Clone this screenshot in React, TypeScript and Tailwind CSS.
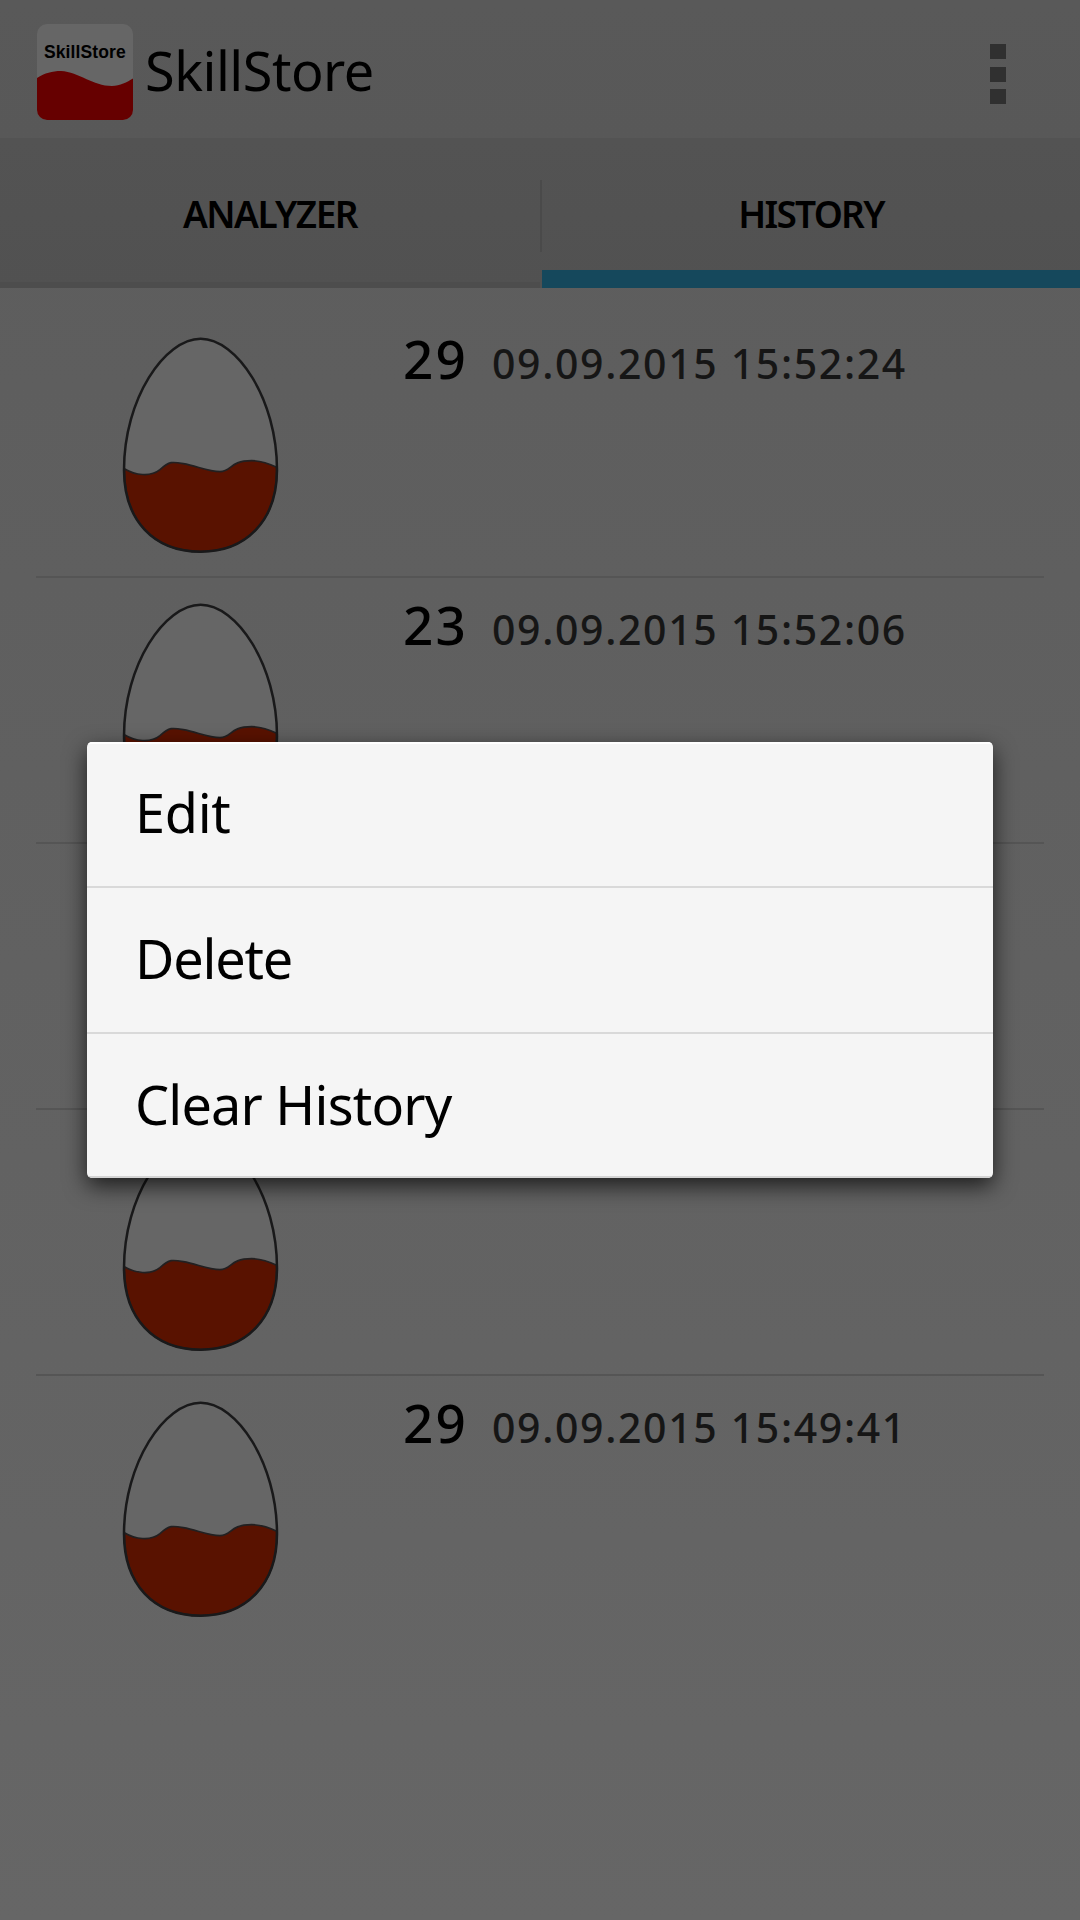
const entries = [
  { score: '29', date: '09.09.2015 15:52:24' },
  { score: '23', date: '09.09.2015 15:52:06' },
  { score: '', date: '' },
  { score: '', date: '' },
  { score: '29', date: '09.09.2015 15:49:41' },
];

const actions = [
  { label: 'Edit', spacing: 'tracking-[-0.3px]' },
  { label: 'Delete', spacing: 'tracking-[-1.2px]' },
  { label: 'Clear History', spacing: 'tracking-[-0.8px]' },
];

function Logo() {
  return (
    <div className="relative h-24 w-24 overflow-hidden rounded-[10px] bg-[#666666]">
      <svg className="block h-24 w-24" viewBox="0 0 96 96">
        <path d="M0 54C8 49 15 47 24 47C42 48 56 62 75 62C83 62 90 58 96 54.500V96H0Z" fill="#660000" />
      </svg>
      <span className="absolute left-[7px] top-[18px] font-['Liberation_Sans'] text-[17.5px] leading-5 font-bold tracking-[0.1px] text-black">
        SkillStore
      </span>
    </div>
  );
}

function Egg() {
  return (
    <svg className="block h-[217px] w-[157px]" viewBox="66 51 471 651">
      <path
        d="M302 56C410 56 531 236 531 450C531 600 440 695 302 695C160 695 72 600 72 450C72 236 194 56 302 56Z"
        fill="#666666"
      />
      <path
        d="M73 446C105 465 150 473 180 449C208 423 218 425 250 431C290 438 325 455 360 455C396 455 388 422 455 422C485 422 508 431 530 442V450C531 600 440 695 302 695C160 695 72 600 73 446Z"
        fill="#591200"
        stroke="#222021"
        strokeWidth="5"
      />
      <path
        d="M302 56C410 56 531 236 531 450C531 600 440 695 302 695C160 695 72 600 72 450C72 236 194 56 302 56Z"
        fill="none"
        stroke="#19191a"
        strokeWidth="7.5"
      />
    </svg>
  );
}

export default function App() {
  return (
    <div className="relative flex h-[1920px] w-[1080px] flex-col overflow-hidden bg-linear-to-b from-[#5c5c5c] to-[#666666] font-['Noto_Sans',sans-serif] text-black">
      <header className="flex h-[138px] shrink-0 items-start bg-linear-to-b from-[#595959] to-[#585858] pt-6 pl-[37px]">
        <Logo />
        <h1 className="mt-[10px] ml-3 text-[54px] leading-[72px] tracking-[-0.5px]">SkillStore</h1>
        <div className="mt-5 mr-[74px] ml-auto flex flex-col gap-[7.5px]">
          <i className="h-[15px] w-4 bg-[#303030]" />
          <i className="h-[15px] w-4 bg-[#303030]" />
          <i className="h-[15px] w-4 bg-[#303030]" />
        </div>
      </header>
      <nav className="flex h-[150px] shrink-0 bg-linear-to-b from-[#535353] to-[#515151] text-[37px] leading-[50px] font-semibold">
        <div className="flex h-full w-[540px] justify-center border-b-[6px] border-[#4d4d4d] pt-[51px]">
          <span className="tracking-[-1.5px]">ANALYZER</span>
        </div>
        <div className="mt-[42px] h-[72px] w-[2px] bg-[#4a4a4a]" />
        <div className="flex h-full flex-1 justify-center border-b-[18px] border-[#15485c] pt-[51px]">
          <span className="tracking-[-1.7px]">HISTORY</span>
        </div>
      </nav>
      <main className="mx-9 mt-6 flex flex-col">
        {entries.map((entry, i) => (
          <div
            key={i}
            className="flex h-[266px] items-start border-b-2 border-[#555555] pt-[25px] pl-[86px] last:border-transparent"
          >
            <Egg />
            <div className="-mt-[14px] ml-[124px] flex items-baseline leading-[72px] font-medium">
              <span className="w-[89px] text-[53px] tracking-[2.3px]">{entry.score}</span>
              <span className="text-[41px] tracking-[1.65px] whitespace-nowrap text-[#161616]">{entry.date}</span>
            </div>
          </div>
        ))}
      </main>
      <div className="absolute top-[742px] left-[87px] flex h-[436px] w-[906px] flex-col overflow-hidden rounded-[5px] bg-[#f5f5f5] shadow-[0_8px_22px_rgba(0,0,0,0.7)]">
        {actions.map(({ label, spacing }) => (
          <div
            key={label}
            className="flex h-[146px] shrink-0 items-start border-b-2 border-[#d9d9d9] pt-[34px] pl-12 text-[54px] leading-[72px] last:border-b-0"
          >
            <span className={spacing}>{label}</span>
          </div>
        ))}
        <div className="absolute inset-x-0 top-0 h-[2px] bg-white" />
        <div className="absolute inset-x-0 bottom-0 h-[2px] bg-[#d4d4d4]" />
      </div>
    </div>
  );
}
